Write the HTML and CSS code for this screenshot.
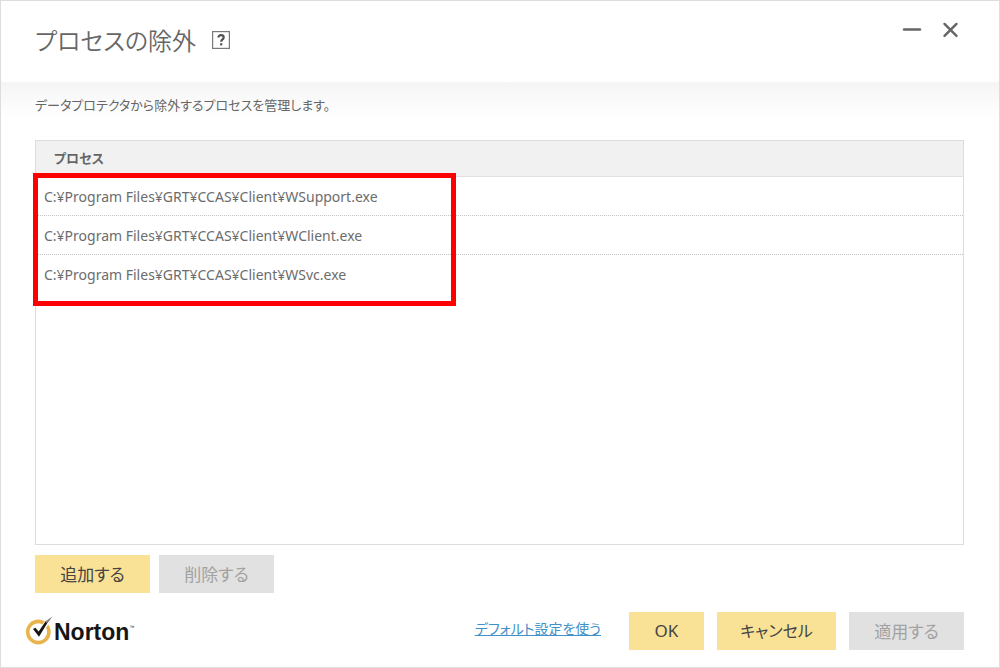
FILE: index.html
```html
<!DOCTYPE html>
<html lang="ja">
<head>
<meta charset="utf-8">
<title>プロセスの除外</title>
<link rel="stylesheet" href="styles.css">
</head>
<body>
<div class="dialog">
  <header class="titlebar">
    <h1 class="title">プロセスの除外</h1>
    <button class="icon-button help" type="button" aria-label="ヘルプ">
      <svg width="18" height="18" viewBox="0 0 18 18" fill="none"><rect x="0.6" y="0.6" width="16.8" height="16.8" stroke="#7a7a7a" stroke-width="1.2"/><path d="M6.4 6.6C6.4 4.9 7.5 4.2 9.1 4.2C10.7 4.2 11.7 5 11.7 6.4C11.7 8.4 9.2 8.4 9.2 10.7" stroke="#505050" stroke-width="2.2"/><path d="M8.1 12.2h2.2v2.2H8.1z" fill="#505050"/></svg>
    </button>
    <div class="window-controls">
      <button class="icon-button" type="button" aria-label="最小化">
        <svg width="20" height="20" viewBox="0 0 20 20"><path d="M2 9.5H18" stroke="#666" stroke-width="2.4" stroke-linecap="round"/></svg>
      </button>
      <button class="icon-button" type="button" aria-label="閉じる">
        <svg width="20" height="20" viewBox="0 0 20 20"><path d="M4.5 3.9L16.5 15.9M16.5 3.9L4.5 15.9" stroke="#666" stroke-width="2.4" stroke-linecap="round"/></svg>
      </button>
    </div>
  </header>
  <main class="content">
    <p class="description">データプロテクタから除外するプロセスを管理します。</p>
    <div class="list-panel">
      <table class="process-table">
        <thead><tr><th scope="col">プロセス</th></tr></thead>
        <tbody>
          <tr><td>C:¥Program Files¥GRT¥CCAS¥Client¥WSupport.exe</td></tr>
          <tr><td>C:¥Program Files¥GRT¥CCAS¥Client¥WClient.exe</td></tr>
          <tr><td>C:¥Program Files¥GRT¥CCAS¥Client¥WSvc.exe</td></tr>
        </tbody>
      </table>
      <div class="highlight"></div>
    </div>
    <div class="list-actions">
      <button class="button" type="button">追加する</button>
      <button class="button" type="button" disabled>削除する</button>
    </div>
  </main>
  <footer class="footer">
    <div class="brand">
      <svg class="brand-mark" width="28" height="30" viewBox="0 0 28 30" fill="none"><circle cx="13.3" cy="17" r="10.6" stroke="#e9b44c" stroke-width="3.6"/><path d="M7.6 14L10.5 12.4L13.6 15.8L20.2 6.3L27.5 1L25.5 5.5L14.2 22Z" fill="#fff" stroke="#fff" stroke-width="1"/><path d="M8 14.1L10.4 12.8L13.6 16.5L20.5 6.6L24.8 4.1L14 21.8Z" fill="#161616"/><path d="M20.5 6.6L27.6 1.3L24.2 5.9L21.8 8.3Z" fill="#85817a"/></svg>
      <span class="brand-name">Norton</span><span class="brand-tm">™</span>
    </div>
    <a class="defaults" href="#">デフォルト設定を使う</a>
    <div class="footer-actions">
      <button class="button button-ok" type="button">OK</button>
      <button class="button button-cancel" type="button">キャンセル</button>
      <button class="button" type="button" disabled>適用する</button>
    </div>
  </footer>
</div>
</body>
</html>
```
FILE: styles.css
```css
* { box-sizing: border-box; }

body {
  margin: 0;
  background: #fff;
  color: #666;
  font-family: "Noto Sans", "Noto Sans CJK JP", sans-serif;
  font-size: 14px;
  font-feature-settings: "palt";
}

.dialog {
  display: flex;
  flex-direction: column;
  min-height: 100vh;
  border: 1px solid #ddd;
}

.titlebar {
  display: flex;
  align-items: center;
  gap: 16px;
  height: 81px;
  padding: 0 39px 3px 34px;
}

.title {
  margin: 0;
  padding-top: 2px;
  font-size: 24px;
  line-height: 40px;
  font-weight: 350;
}

.icon-button {
  display: flex;
  padding: 0;
  border: 0;
  background: none;
}

.window-controls {
  display: flex;
  gap: 18px;
  margin-left: auto;
  padding-bottom: 20px;
}

.content {
  display: flex;
  flex: 1;
  flex-direction: column;
  padding: 0 35px 0 34px;
  background: linear-gradient(#f5f5f5, #fff 36px);
}

.description {
  margin: 0;
  padding: 13px 0 25px;
  font-size: 13px;
  line-height: 20px;
}

.list-panel {
  position: relative;
  flex: 1;
  border: 1px solid #ddd;
  background: #fff;
}

.process-table {
  width: 100%;
  border-collapse: collapse;
}

.process-table th {
  height: 35px;
  padding: 0 18px 2px;
  border-bottom: 1px solid #e2e2e2;
  background: #f1f1f1;
  font-size: 13px;
  text-align: left;
}

.process-table td {
  height: 39px;
  padding: 2px 8px 0;
  border-bottom: 1px dotted #c4c4c4;
  color: #6c6c6c;
}

.process-table tr:last-child td { border-bottom: 0; }

.highlight {
  position: absolute;
  top: 32px;
  left: -3px;
  width: 423px;
  height: 133px;
  border: 5px solid #f00;
  pointer-events: none;
}

.list-actions {
  display: flex;
  gap: 9px;
  padding-top: 10px;
}

.button {
  min-width: 115px;
  height: 38px;
  padding: 0 16px 2px;
  border: 0;
  background: #f9e195;
  color: #444;
  font: inherit;
  font-size: 17px;
}

.button:disabled {
  background: #e1e1e1;
  color: #a2a2a2;
}

.button-ok { min-width: 75px; }

.button-cancel {
  min-width: 119px;
  font-size: 16px;
}

.footer {
  display: flex;
  align-items: center;
  padding: 19px 35px 17px 24px;
}

.brand {
  display: flex;
  align-items: center;
  color: #161616;
  font-family: "Liberation Sans", Arial, sans-serif;
}

.brand-mark { margin-bottom: 2px; }

.brand-name {
  padding: 2px 0 0 1px;
  font-size: 23px;
  font-weight: 700;
}

.brand-tm {
  padding-bottom: 8px;
  font-size: 5px;
}

.defaults {
  margin-left: auto;
  padding-bottom: 6px;
  color: #4290c8;
}

.footer-actions {
  display: flex;
  gap: 13px;
  margin-left: 28px;
}
```
